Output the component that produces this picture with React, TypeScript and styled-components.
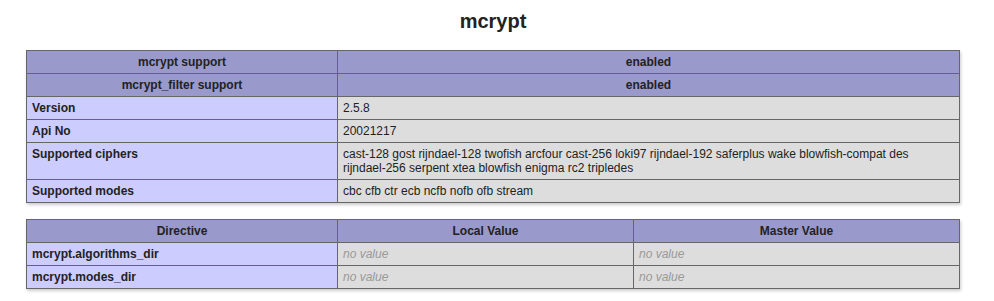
import styled, { createGlobalStyle } from 'styled-components'

const GlobalStyle = createGlobalStyle`
  body {
    margin: 0 8px;
    background: #fff;
    color: #222;
    font-family: "Liberation Sans", Arial, sans-serif;
  }
`

const Center = styled.div`
  width: 970px;
  text-align: center;
`

const Title = styled.h2`
  font-size: 20px;
  font-weight: bold;
  margin: 10px 0 17px;
  line-height: 23px;
`

const Table = styled.table`
  border-collapse: collapse;
  border: 0;
  width: 934px;
  margin: 16px auto;
  text-align: left;
  box-shadow: 1px 2px 3px #ccc;
`

const Cell = styled.td`
  border: 1px solid #666;
  font-size: 12px;
  line-height: 14px;
  vertical-align: baseline;
  padding: 4px 5px;
`

const Head = styled(Cell).attrs({ as: 'th' })<{ $w?: number }>`
  background: #99c;
  font-weight: bold;
  text-align: center;
  ${p => (p.$w ? `width: ${p.$w}px;` : '')}
`

const Key = styled(Cell)`
  background: #ccf;
  width: 300px;
  font-weight: bold;
`

const Val = styled(Cell)`
  background: #ddd;
  max-width: 300px;
  word-wrap: break-word;
`

const NoValue = styled.i`
  color: #999;
`

const info: [string, string][] = [
  ['Version', '2.5.8'],
  ['Api No', '20021217'],
  [
    'Supported ciphers',
    'cast-128 gost rijndael-128 twofish arcfour cast-256 loki97 rijndael-192 saferplus wake blowfish-compat des rijndael-256 serpent xtea blowfish enigma rc2 tripledes',
  ],
  ['Supported modes', 'cbc cfb ctr ecb ncfb nofb ofb stream'],
]

const directives = ['mcrypt.algorithms_dir', 'mcrypt.modes_dir']

export default function App() {
  return (
    <>
      <GlobalStyle />
      <Center>
        <Title>mcrypt</Title>
        <Table>
          <tbody>
            <tr>
              <Head $w={300}>mcrypt support</Head>
              <Head>enabled</Head>
            </tr>
            <tr>
              <Head $w={300}>mcrypt_filter support</Head>
              <Head>enabled</Head>
            </tr>
            {info.map(([k, v]) => (
              <tr key={k}>
                <Key>{k}</Key>
                <Val>{v}</Val>
              </tr>
            ))}
          </tbody>
        </Table>
        <Table>
          <tbody>
            <tr>
              <Head $w={300}>Directive</Head>
              <Head $w={285}>Local Value</Head>
              <Head>Master Value</Head>
            </tr>
            {directives.map(d => (
              <tr key={d}>
                <Key>{d}</Key>
                <Val>
                  <NoValue>no value</NoValue>
                </Val>
                <Val>
                  <NoValue>no value</NoValue>
                </Val>
              </tr>
            ))}
          </tbody>
        </Table>
      </Center>
    </>
  )
}
